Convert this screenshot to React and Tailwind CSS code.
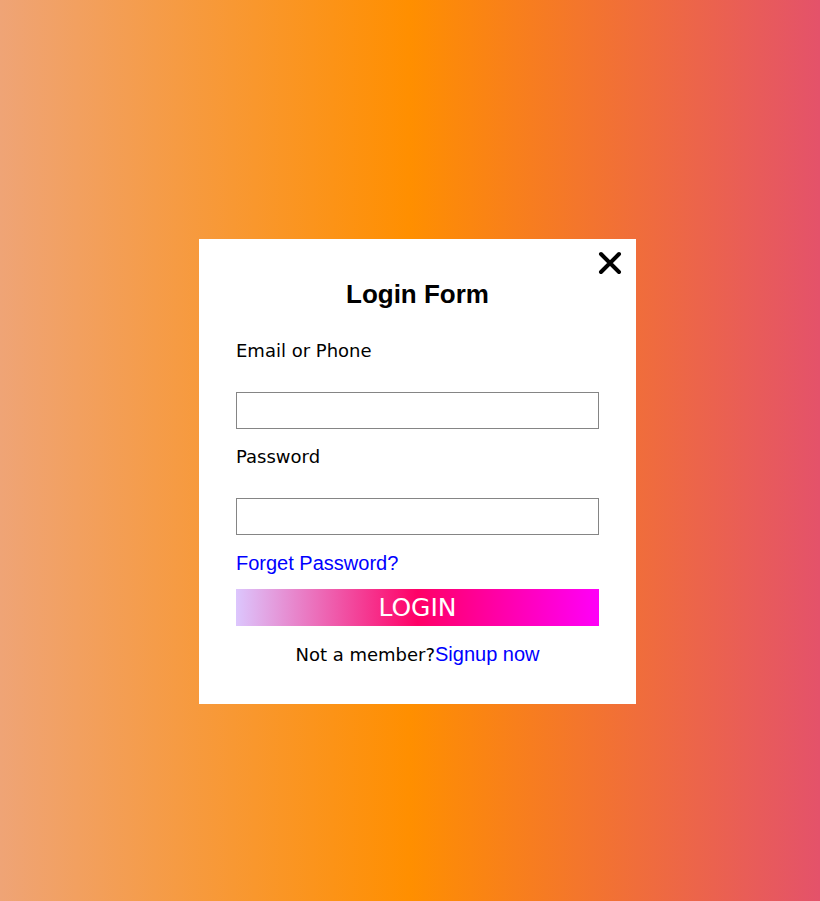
import { useState } from "react";

const COMIC = { fontFamily: '"Comic Sans MS", "DejaVu Sans", sans-serif' };

function CloseIcon() {
  return (
    <svg viewBox="0 0 24 24" className="h-[24px] w-[24px]" fill="none" stroke="#000" strokeWidth="4" strokeLinecap="round">
      <path d="M3 3 L21 21 M21 3 L3 21" />
    </svg>
  );
}

export default function App() {
  const [email, setEmail] = useState("");
  const [password, setPassword] = useState("");

  return (
    <div className="flex min-h-[901px] w-full items-center justify-center bg-linear-to-r/srgb from-[#efa476] via-[#ff8f00] to-[#e4526a] pl-[15px] pt-[42px]">
      <div className="relative w-[437px] bg-white px-[37px] pt-[40px] pb-[38px]">
        <button className="absolute right-[14px] top-[12px] cursor-pointer">
          <CloseIcon />
        </button>

        <h2 className="h-[30px] text-center text-[26px] font-bold leading-[30px] text-black [font-family:'Liberation_Sans',Arial,sans-serif]">
          Login Form
        </h2>

        <label className="mt-[30px] block h-[24px] text-[18px] leading-[24px] text-black" style={COMIC}>
          Email or Phone
        </label>
        <input
          value={email}
          onChange={(e) => setEmail(e.target.value)}
          className="mt-[29px] block h-[37px] w-full border border-[#858585] bg-white px-2 outline-none"
        />

        <label className="mt-[16px] block h-[24px] text-[18px] leading-[24px] text-black" style={COMIC}>
          Password
        </label>
        <input
          type="password"
          value={password}
          onChange={(e) => setPassword(e.target.value)}
          className="mt-[29px] block h-[37px] w-full border border-[#858585] bg-white px-2 outline-none"
        />

        <a href="#" className="mt-[16px] block h-[24px] text-[20px] leading-[24px] text-[#0000ff] [font-family:'Liberation_Sans',Arial,sans-serif]">
          Forget Password?
        </a>

        <button className="mt-[14px] block h-[37px] w-full bg-linear-to-r/srgb from-[#dcc6fd] via-[#ff0066] to-[#ff00f8] text-[25px] leading-[37px] text-white [font-family:'DejaVu_Sans',Verdana,sans-serif]">
          LOGIN
        </button>

        <p className="mt-[16px] h-[24px] text-center text-[18px] leading-[24px] text-black" style={COMIC}>
          Not a member?
          <a href="#" className="text-[20px] text-[#0000ff] [font-family:'Liberation_Sans',Arial,sans-serif]">
            Signup now
          </a>
        </p>
      </div>
    </div>
  );
}
